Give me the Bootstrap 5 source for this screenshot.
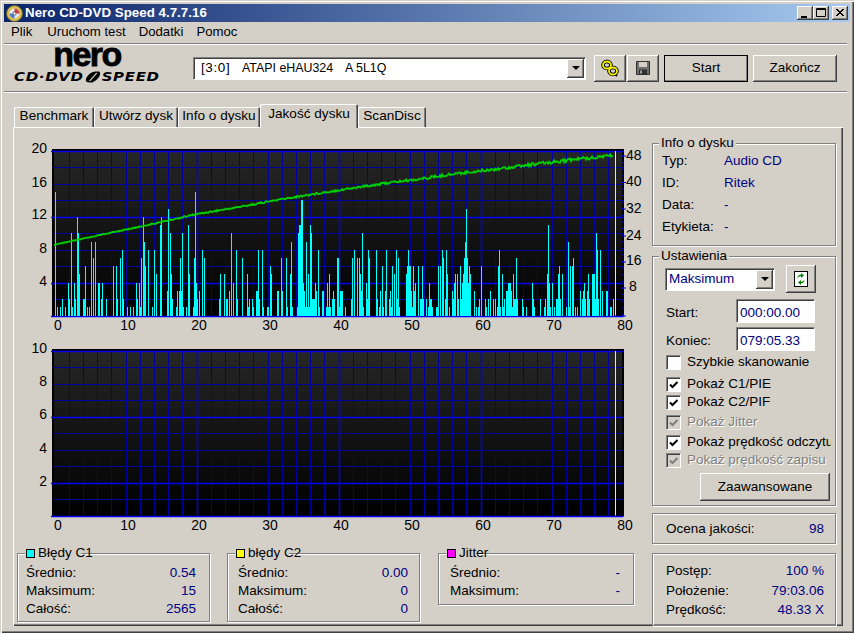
<!DOCTYPE html>
<html lang="pl">
<head>
<meta charset="utf-8">
<title>Nero CD-DVD Speed</title>
<link href="https://cdn.jsdelivr.net/npm/bootstrap@5.3.0/dist/css/bootstrap.min.css" rel="stylesheet">
<style>
html,body{margin:0;padding:0;background:#d4d0c8;overflow:hidden}
body{font-family:"Liberation Sans",Arial,sans-serif;font-size:13.5px;line-height:18px;color:#000}
.wwin{width:854px;height:633px;background:#d4d0c8;padding:4px 0 0 4px;box-shadow:inset 1px 1px 0 #d4d0c8,inset 2px 2px 0 #fff,inset -1px -1px 0 #404040,inset -2px -2px 0 #808080}
.wtitle{width:846px;height:18px;background:linear-gradient(90deg,#0a246a,#a6caf0);color:#fff;font-weight:700;font-size:13.3px;letter-spacing:.03px}
.wtitle svg{margin:0 2px 0 2px}
.wcap{width:16px;height:14px;padding:0;border:0;background:#d4d0c8;box-shadow:inset -1px -1px 0 #404040,inset 1px 1px 0 #fff,inset -2px -2px 0 #808080;display:block}
.wcap svg{display:block;margin:0}
.wcap-gap{margin-left:3px}
.wcaps{margin-right:2px}
.wmenu{height:20px;padding-left:7px;gap:13px;font-size:13.2px}
.wmenu span:first-child{margin-right:2px}
.wetch{width:843px;height:2px;border-top:1px solid #808080;border-bottom:1px solid #fff}
.wetch-a{margin-top:1px}
.wtool{height:46px}
.wlogo{width:146px;height:36px;margin-left:10px;align-self:flex-start;padding-top:1px}
.wnero{font-weight:700;font-size:34px;line-height:16px;letter-spacing:-1.6px;height:16px;text-align:center;-webkit-text-stroke:.8px #000}
.wcdd{font-family:"DejaVu Sans",sans-serif;font-weight:700;font-style:italic;font-size:12.5px;line-height:13px;letter-spacing:.55px;white-space:nowrap;margin-top:8px;transform:scaleX(1.2);transform-origin:left center}
.wcdd svg{vertical-align:-2px}
.wsunk{background:#fff;border-top:1px solid #808080;border-left:1px solid #808080;border-right:1px solid #fff;border-bottom:1px solid #fff;box-shadow:inset 1px 1px 0 #404040}
.wcombo-main{width:393px;height:23px;margin-left:33px;padding:1px 1px 1px 7px;white-space:nowrap;font-size:12.4px}
.wcs-a{width:41px;font-size:13.5px;letter-spacing:.6px}
.wcs-b{width:103px}
.wcombo-set{width:110px;height:23px;padding:1px 1px 1px 3px}
.warrow{width:17px;background:#d4d0c8;box-shadow:inset -1px -1px 0 #404040,inset 1px 1px 0 #fff,inset -2px -2px 0 #808080}
.warrow i{width:0;height:0;border-left:4px solid transparent;border-right:4px solid transparent;border-top:4px solid #000;display:block}
.btn.wbtn{--bs-btn-font-size:13.5px;background:#d4d0c8;color:#000;border:0;border-radius:0;padding:0;line-height:18px;font-size:13.5px;box-shadow:inset -1px -1px 0 #404040,inset 1px 1px 0 #fff,inset -2px -2px 0 #808080}
.wico{width:32px;height:27px}
.wico1{margin-left:8px}
.wico2{margin-left:1px}
.wstart{width:84px;height:27px;margin-left:5px;outline:1px solid #000;outline-offset:-1px}
.wend{width:84px;height:27px;margin-left:5px}
.nav.wtabs{border:0;margin:11px 0 0 10px;height:23px;align-items:flex-end;flex-wrap:nowrap}
.wtabs .nav-link{--bs-nav-link-padding-x:0;color:#000;font-size:13.6px;line-height:18px;height:20px;padding:0;text-align:center;background:#d4d0c8;border:0;border-radius:2px 2px 0 0;box-shadow:inset 1px 1px 0 #fff,inset -1px 0 0 #404040,inset -2px 0 0 #808080}
.wtabs .nav-link.active{height:24px;margin-bottom:-1px;padding-top:1px;position:relative;z-index:2;color:#000;background:#d4d0c8}
.wt1{width:80px}.wt2{width:84px}.wt3{width:82px}.wt4{width:98px}.wt5{width:68px}
.wpanel{width:830px;height:499px;margin-left:9px;background:#d4d0c8;box-shadow:inset 1px 1px 0 #fff,inset -1px -1px 0 #404040,inset -2px -2px 0 #808080;padding:1px 0 0 1px}
.wcharts{width:636px;margin-top:13px}
.wcharts svg{display:block}
.wcharts svg text{font-family:"Liberation Sans",Arial,sans-serif;font-size:14px;fill:#000;transform:translateY(-1px)}
.wchart2{margin-top:6px}
.wstats{margin:18px 0 0 3px}
.wgrp{position:relative;border:1px solid #808080;box-shadow:1px 1px 0 #fff,inset 1px 1px 0 #fff}
.wlg{position:absolute;top:-10px;left:6px;padding:0 2px;background:#d4d0c8;line-height:18px;white-space:nowrap}
.wlg2{left:7px;padding:0 0 0 1px}
.wlg2 b{font-weight:400;margin-right:-12px;display:inline-block;position:relative}
.wsw{display:inline-block;width:9px;height:9px;border:1px solid #000;margin-right:3px;vertical-align:-1px}
.wc1{background:#0ff}.wc2{background:#ff0}.wc3{background:#f0f}
.wg-c1{width:193px;height:69px;padding:10px 13px 0 8px}
.wg-c2{width:193px;height:69px;padding:10px 11px 0 10px;margin-left:17px}
.wg-c3{width:196px;height:52px;padding:10px 13px 0 11px;margin-left:18px}
.wrow18{height:18px;white-space:nowrap}
.wval{color:#000080}
.wright{width:184px;margin:15px 0 0 2px}
.wg-info{height:103px;padding:6px 0 0 9px}
.wrow22{height:22px;line-height:22px}
.wlab{width:62px}
.wg-set{height:250px;margin-top:10px;padding:8px 0 0 12px}
.wrefresh{width:30px;height:28px;margin-left:11px}
.wfr{height:24px;margin-top:6px}
.wfr2{margin-top:4px}
.wfr span{width:71px;padding:5px 0 0 1px}
.form-control.wfield{width:79px;height:24px;font-size:13.5px;line-height:18px;padding:2px 0 0 3px;border-radius:0;color:#000080;background:#fff;border-top:1px solid #808080;border-left:1px solid #808080;border-right:1px solid #fff;border-bottom:1px solid #fff;box-shadow:inset 1px 1px 0 #404040}
.wck{height:18px;width:165px;overflow:hidden;white-space:nowrap;margin-left:1px;gap:6px}
.wck0{margin-top:2px}.wck1{margin-top:4px}.wck2{margin-top:2px}
.form-check-input.wchk{width:15px;height:15px;margin:0;flex:none;border-radius:0;background-color:#fff;border:1px solid #808080;border-right-color:#fff;border-bottom-color:#fff;box-shadow:inset 1px 1px 0 #404040;opacity:1}
.form-check-input.wchk:checked[type=checkbox]{background-color:#fff;border-color:#808080 #fff #fff #808080;background-size:15px 15px;background-position:-1px -1px;background-image:url("data:image/svg+xml,%3Csvg xmlns='http://www.w3.org/2000/svg' viewBox='0 0 15 15'%3E%3Cpath d='M4 7.5l2.5 2.5 5-5' fill='none' stroke='%23000' stroke-width='2'/%3E%3C/svg%3E")}
.form-check-input.wchk:disabled{opacity:1}
.form-check-input.wchk:disabled:checked[type=checkbox]{background-color:#d4d0c8;background-image:url("data:image/svg+xml,%3Csvg xmlns='http://www.w3.org/2000/svg' viewBox='0 0 15 15'%3E%3Cpath d='M4 7.5l2.5 2.5 5-5' fill='none' stroke='%23808080' stroke-width='2'/%3E%3C/svg%3E")}
.wdis{color:#808080;text-shadow:1px 1px 0 #fff}
.wadv{width:130px;height:28px;margin:4px 0 0 35px}
.wg-oc{height:31px;margin-top:7px;padding:6px 11px 0 13px}
.wg-pos{height:73px;margin-top:9px;padding:7px 11px 0 13px}
.wrow20{height:20px;line-height:20px}
.wrow20b{height:18px;line-height:18px}
</style>
</head>
<body>
<div class="wwin">
  <div class="wtitle d-flex align-items-center">
    <svg width="17" height="17" viewBox="0 0 17 17"><circle cx="8.5" cy="8.5" r="8" fill="#d8c050" stroke="#5a5a30"/><circle cx="8.5" cy="8.5" r="5" fill="#e8e8f0"/><path d="M8.5 3.5A5 5 0 0 1 13.5 8.5L8.5 8.5Z" fill="#d04040"/><path d="M3.5 8.5A5 5 0 0 0 8.5 13.5L8.5 8.5Z" fill="#5080d0"/><circle cx="8.5" cy="8.5" r="1.6" fill="#fff" stroke="#555"/></svg>
    <span class="flex-grow-1">Nero CD-DVD Speed 4.7.7.16</span>
    <div class="d-flex wcaps">
      <button class="wcap" type="button" aria-label="min"><svg width="16" height="14"><rect x="4" y="10" width="6" height="2" fill="#000"/></svg></button>
      <button class="wcap" type="button" aria-label="max"><svg width="16" height="14"><path d="M3.5 2.5h9v8h-9z M3 3.5h10" fill="none" stroke="#000"/></svg></button>
      <button class="wcap wcap-gap" type="button" aria-label="close"><svg width="16" height="14"><path d="M4 3l7 7M11 3l-7 7M5 3l7 7M12 3l-7 7" fill="none" stroke="#000"/></svg></button>
    </div>
  </div>
  <div class="wmenu d-flex align-items-center"><span>Plik</span><span>Uruchom test</span><span>Dodatki</span><span>Pomoc</span></div>
  <div class="wetch wetch-a"></div>
  <div class="wtool d-flex align-items-center">
    <div class="wlogo">
      <div class="wnero">nero</div>
      <div class="wcdd">CD·DVD<svg width="15" height="12" viewBox="0 0 15 12"><path d="M5 11.5C1 11.5 1 8 4 4S11 .5 13 .5C15 2 13 7 10 9.500S7 11.500 5 11.500Z" fill="#000"/><path d="M5 10L11 2" stroke="#d4d0c8" stroke-width="1.2"/></svg>SPEED</div>
    </div>
    <div class="wcombo-main wsunk d-flex"><span class="wcs-a">[3:0]</span><span class="wcs-b">ATAPI eHAU324</span><span class="flex-grow-1">A 5L1Q</span><span class="warrow d-flex align-items-center justify-content-center"><i></i></span></div>
    <button class="btn wbtn wico wico1 d-flex align-items-center justify-content-center" type="button" aria-label="link">
      <svg width="20" height="20" viewBox="0 0 20 20"><g fill="none"><ellipse cx="7" cy="7" rx="4" ry="3.500" stroke="#000" stroke-width="3.600"/><ellipse cx="13" cy="13" rx="4" ry="3.500" stroke="#000" stroke-width="3.600"/><path d="M6 2l2 3M15 16l2 2" stroke="#000" stroke-width="2"/><ellipse cx="7" cy="7" rx="4" ry="3.500" stroke="#f4f400" stroke-width="1.800"/><ellipse cx="13" cy="13" rx="4" ry="3.500" stroke="#f4f400" stroke-width="1.800"/></g></svg>
    </button>
    <button class="btn wbtn wico wico2 d-flex align-items-center justify-content-center" type="button" aria-label="save">
      <svg width="14" height="14" viewBox="0 0 14 14"><path d="M.5.500h13v13H.5z" fill="#707070" stroke="#303030"/><rect x="3" y="1" width="8" height="5" fill="#d4d0c8"/><rect x="3" y="8.500" width="8" height="5" fill="#303030"/><rect x="4" y="9.500" width="2" height="3" fill="#a0a0a0"/></svg>
    </button>
    <button class="btn wbtn wstart" type="button">Start</button>
    <button class="btn wbtn wend" type="button">Zakończ</button>
  </div>
  <div class="wetch"></div>
  <ul class="nav wtabs">
    <li><a class="nav-link wt1" href="#">Benchmark</a></li>
    <li><a class="nav-link wt2" href="#">Utwórz dysk</a></li>
    <li><a class="nav-link wt3" href="#">Info o dysku</a></li>
    <li><a class="nav-link wt4 active" href="#">Jakość dysku</a></li>
    <li><a class="nav-link wt5" href="#">ScanDisc</a></li>
  </ul>
  <div class="wpanel d-flex">
    <div class="wcharts">
      <svg id="chartA" width="636" height="194" viewBox="14 140 636 194">
        <g id="gridA"></g>
        <path id="barsA" fill="none" stroke="#00ffff" stroke-width="1" shape-rendering="crispEdges"/>
        <path id="lineA" fill="none" stroke="#00d000" stroke-width="1.800"/>
        <g text-anchor="end"><text x="47" y="153">20</text><text x="47" y="187">16</text><text x="47" y="219">12</text><text x="47" y="253">8</text><text x="47" y="286">4</text></g>
        <g><text x="626" y="160">48</text><text x="626" y="186">40</text><text x="626" y="213">32</text><text x="626" y="240">24</text><text x="626" y="265">16</text><text x="629" y="291">8</text></g>
        <g text-anchor="middle"><text x="58" y="330">0</text><text x="128" y="330">10</text><text x="199" y="330">20</text><text x="270" y="330">30</text><text x="341" y="330">40</text><text x="412" y="330">50</text><text x="483" y="330">60</text><text x="554" y="330">70</text><text x="625" y="330">80</text></g>
      </svg>
      <svg id="chartB" class="wchart2" width="636" height="194" viewBox="14 340 636 194">
        <g id="gridB"></g>
        <g text-anchor="end"><text x="47" y="353">10</text><text x="47" y="386">8</text><text x="47" y="419">6</text><text x="47" y="453">4</text><text x="47" y="486">2</text></g>
        <g text-anchor="middle"><text x="58" y="530">0</text><text x="128" y="530">10</text><text x="199" y="530">20</text><text x="270" y="530">30</text><text x="341" y="530">40</text><text x="412" y="530">50</text><text x="483" y="530">60</text><text x="554" y="530">70</text><text x="625" y="530">80</text></g>
      </svg>
      <div class="wstats d-flex align-items-start">
        <div class="wgrp wg-c1">
          <div class="wlg wlg2"><span class="wsw wc1"></span><b>Błędy C1</b></div>
          <div class="wrow18 d-flex justify-content-between"><span>Średnio:</span><span class="wval">0.54</span></div>
          <div class="wrow18 d-flex justify-content-between"><span>Maksimum:</span><span class="wval">15</span></div>
          <div class="wrow18 d-flex justify-content-between"><span>Całość:</span><span class="wval">2565</span></div>
        </div>
        <div class="wgrp wg-c2">
          <div class="wlg wlg2"><span class="wsw wc2"></span><b>błędy C2</b></div>
          <div class="wrow18 d-flex justify-content-between"><span>Średnio:</span><span class="wval">0.00</span></div>
          <div class="wrow18 d-flex justify-content-between"><span>Maksimum:</span><span class="wval">0</span></div>
          <div class="wrow18 d-flex justify-content-between"><span>Całość:</span><span class="wval">0</span></div>
        </div>
        <div class="wgrp wg-c3">
          <div class="wlg wlg2"><span class="wsw wc3"></span><b>Jitter</b></div>
          <div class="wrow18 d-flex justify-content-between"><span>Średnio:</span><span class="wval">-</span></div>
          <div class="wrow18 d-flex justify-content-between"><span>Maksimum:</span><span class="wval">-</span></div>
        </div>
      </div>
    </div>
    <div class="wright">
      <div class="wgrp wg-info">
        <div class="wlg">Info o dysku</div>
        <div class="wrow22 d-flex"><span class="wlab">Typ:</span><span class="wval">Audio CD</span></div>
        <div class="wrow22 d-flex"><span class="wlab">ID:</span><span class="wval">Ritek</span></div>
        <div class="wrow22 d-flex"><span class="wlab">Data:</span><span class="wval">-</span></div>
        <div class="wrow22 d-flex"><span class="wlab">Etykieta:</span><span class="wval">-</span></div>
      </div>
      <div class="wgrp wg-set">
        <div class="wlg">Ustawienia</div>
        <div class="d-flex align-items-center">
          <div class="wcombo-set wsunk d-flex"><span class="flex-grow-1 wval">Maksimum</span><span class="warrow d-flex align-items-center justify-content-center"><i></i></span></div>
          <button class="btn wbtn wrefresh d-flex align-items-center justify-content-center" type="button" aria-label="refresh">
            <svg width="14" height="16" viewBox="0 0 14 16"><rect x=".5" y=".5" width="13" height="15" fill="#fff" stroke="#000"/><path d="M7 2l3 2.500L7 7V5.300C5 5.300 4 6 3.800 7.500 3 5.500 4.500 3.700 7 3.700ZM7 14l-3-2.500L7 9v1.700c2 0 3-.7 3.200-2.200.8 2-.7 3.800-3.200 3.800Z" fill="#008000"/></svg>
          </button>
        </div>
        <div class="wfr d-flex"><span>Start:</span><input class="form-control wfield" type="text" value="000:00.00" aria-label="Start"></div>
        <div class="wfr wfr2 d-flex"><span>Koniec:</span><input class="form-control wfield" type="text" value="079:05.33" aria-label="Koniec"></div>
        <div class="wck wck0 d-flex align-items-center"><input class="form-check-input wchk" type="checkbox" aria-label="a"><span>Szybkie skanowanie</span></div>
        <div class="wck wck1 d-flex align-items-center"><input class="form-check-input wchk" type="checkbox" checked aria-label="b"><span>Pokaż C1/PIE</span></div>
        <div class="wck d-flex align-items-center"><input class="form-check-input wchk" type="checkbox" checked aria-label="c"><span>Pokaż C2/PIF</span></div>
        <div class="wck wck2 d-flex align-items-center"><input class="form-check-input wchk" type="checkbox" checked disabled aria-label="d"><span class="wdis">Pokaż Jitter</span></div>
        <div class="wck wck2 d-flex align-items-center"><input class="form-check-input wchk" type="checkbox" checked aria-label="e"><span>Pokaż prędkość odczytu</span></div>
        <div class="wck d-flex align-items-center"><input class="form-check-input wchk" type="checkbox" checked disabled aria-label="f"><span class="wdis">Pokaż prędkość zapisu</span></div>
        <button class="btn wbtn wadv d-block" type="button">Zaawansowane</button>
      </div>
      <div class="wgrp wg-oc d-flex justify-content-between"><span>Ocena jakości:</span><span class="wval">98</span></div>
      <div class="wgrp wg-pos">
        <div class="wrow20 d-flex justify-content-between"><span>Postęp:</span><span class="wval">100 %</span></div>
        <div class="wrow20 d-flex justify-content-between"><span>Położenie:</span><span class="wval">79:03.06</span></div>
        <div class="wrow20b d-flex justify-content-between"><span>Prędkość:</span><span class="wval">48.33 X</span></div>
      </div>
    </div>
  </div>
</div>
<svg width="0" height="0" class="position-absolute"><defs><linearGradient id="plotG" x1="0" y1="0" x2="0" y2="1"><stop offset="0" stop-color="#262626"/><stop offset="1" stop-color="#000"/></linearGradient></defs></svg>
<script src="https://cdn.jsdelivr.net/npm/bootstrap@5.3.0/dist/js/bootstrap.bundle.min.js"></script>
<script>
function grid(id,y0,right){
  var h=164.5,s='';
  s+='<rect x="52" y="'+(y0-2)+'" width="572" height="'+(h+3)+'" fill="#000"/>';
  s+='<rect x="54" y="'+y0+'" width="568" height="'+h+'" fill="url(#plotG)"/>';
  var i,x,y,maj;
  for(i=1;i<40;i++){x=Math.round(54.6+14.2*i)+.5;maj=(i%10==0);
    s+='<line x1="'+x+'" x2="'+x+'" y1="'+y0+'" y2="'+(y0+h)+'" stroke="'+(maj?'#0000f0':'#00009c')+'" stroke-width="'+(maj?1.5:1)+'"/>';}
  for(i=0;i<=10;i++){y=Math.round(y0+i*16.45)+.5;maj=(i==0||i==4||i==8||i==10);
    s+='<line x1="'+(maj?51:54)+'" x2="623" y1="'+y+'" y2="'+y+'" stroke="'+(maj?'#0000f0':'#00009c')+'" stroke-width="'+(maj?1.5:1)+'"/>';}
  s+='<line x1="615.500" x2="615.500" y1="'+y0+'" y2="'+(y0+h)+'" stroke="#e4e4e4" stroke-width="1"/>';
  if(right){
    for(y=155;y<=315;y+=6.6){s+='<line x1="622" x2="624" y1="'+y+'" y2="'+y+'" stroke="#0000f0"/>';}
    [155,181.500,208,235,261,287,315].forEach(function(v){s+='<line x1="622" x2="626" y1="'+v+'" y2="'+v+'" stroke="#0000f0"/>';});
  }
  document.getElementById(id).innerHTML=s;
}
grid('gridA',150,true);grid('gridB',350,false);
var B="55:15,57:1,60:1,62:2,65:1,68:4,69:2,71:10,72:1,74:4,75:2,77:12,78:10,79:5,83:2,84:2,85:6,87:1,89:1,91:9,93:7,95:9,98:4,99:4,101:2,102:4,106:2,113:6,116:6,117:2,120:7,122:8,123:2,127:1,130:1,133:1,136:4,137:2,139:4,140:1,141:7,143:12,144:9,145:6,148:8,152:1,154:8,156:5,160:11,161:12,167:3,168:13,170:10,171:5,172:2,176:1,177:3,179:3,180:7,181:3,182:10,183:1,186:1,188:11,189:5,193:1,194:7,195:15,196:4,197:2,199:3,202:8,204:7,219:2,220:5,224:5,226:2,227:2,229:3,231:10,233:4,236:8,237:2,242:7,247:5,248:1,249:2,252:2,253:1,256:3,257:3,258:8,259:2,262:8,263:1,267:1,268:1,270:6,271:5,277:3,278:3,281:7,282:3,286:7,287:1,290:5,291:9,292:1,297:1,298:10,299:11,300:11,301:14,302:14,303:4,304:3,305:1,306:9,307:1,308:5,309:1,310:11,311:10,312:2,313:2,314:2,315:4,316:3,318:8,319:1,322:3,323:3,326:1,327:4,328:1,329:5,330:1,332:2,333:3,334:2,337:7,338:7,339:1,340:3,341:3,342:3,345:1,351:2,352:7,354:8,357:7,359:7,360:5,361:3,362:10,363:1,366:4,367:2,368:8,369:7,376:8,377:2,379:1,380:3,382:6,383:1,385:3,386:8,389:2,390:3,391:1,392:6,394:5,396:8,397:2,398:7,399:1,406:5,407:6,408:8,409:6,410:6,411:3,412:1,413:6,414:3,415:4,418:6,420:2,421:2,422:6,423:2,426:2,428:1,429:4,430:2,431:2,432:1,436:1,437:1,438:6,440:6,442:8,443:7,445:2,446:8,447:5,449:1,452:3,453:2,454:4,455:5,457:5,458:2,460:6,461:2,462:4,463:5,464:7,465:9,466:13,467:7,468:4,469:6,470:5,474:3,476:1,478:1,479:2,481:6,485:2,486:1,488:2,490:3,493:2,495:2,497:1,498:6,499:8,500:1,502:5,503:1,504:2,506:3,507:3,508:4,509:4,510:4,511:3,512:1,513:5,514:2,515:2,516:7,517:2,522:2,523:1,526:1,532:4,533:2,534:1,540:2,544:1,545:2,547:5,548:11,549:4,550:1,552:4,554:1,556:2,557:2,558:5,559:6,560:2,562:5,566:1,568:9,569:1,570:6,572:6,573:7,575:1,577:1,580:3,582:2,583:3,584:4,585:2,587:3,588:5,589:2,592:5,593:5,594:5,595:2,596:10,597:8,598:2,600:8,602:3,606:3,607:3,610:1,611:1,613:2";
var d='';B.split(',').forEach(function(p){var a=p.split(':');var x=+a[0]+.5;d+='M'+x+' 314.500V'+(314.5-a[1]*8.22).toFixed(1);});
document.getElementById('barsA').setAttribute('d',d);
var P=[[54,244],[100,234],[143,225],[197,213],[233,207],[277,199],[320,192],[353,187],[387,182],[420,178],[453,173],[487,169],[520,165],[553,161],[587,157],[613,154]];
var L='',k=0;
for(var x=54;x<=613;x++){while(x>P[k+1][0])k++;
  var t=(x-P[k][0])/(P[k+1][0]-P[k][0]),y=P[k][1]+t*(P[k+1][1]-P[k][1]);
  var r=Math.sin(x*12.9898)*43758.5453;r=r-Math.floor(r)-.5;
  y+=r*(.6+(x-54)/559*3);
  L+=(L?'L':'M')+x+' '+y.toFixed(1);}
document.getElementById('lineA').setAttribute('d',L);
</script>
</body>
</html>
